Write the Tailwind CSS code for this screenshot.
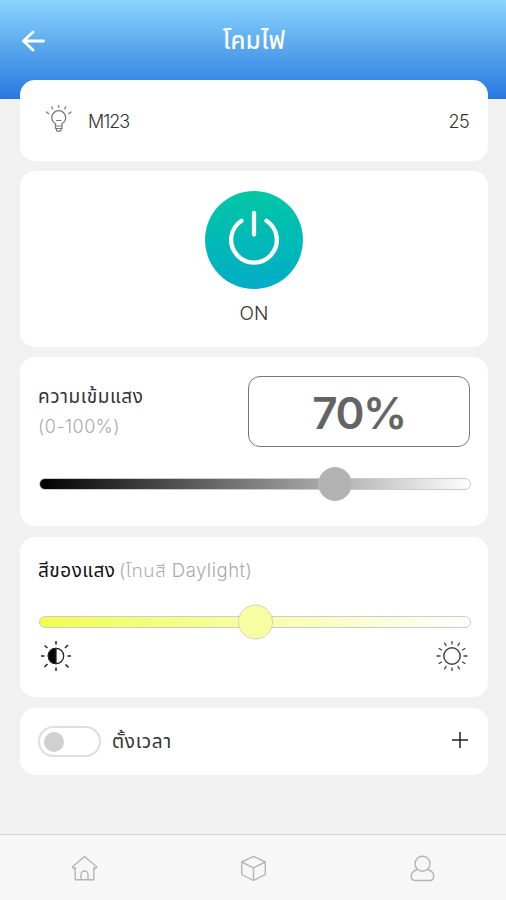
<!DOCTYPE html>
<html lang="th">
  <head>
    <meta charset="UTF-8" />
    <meta name="viewport" content="width=device-width, initial-scale=1.0" />
    <title>โคมไฟ</title>
    <script src="https://cdn.jsdelivr.net/npm/@tailwindcss/browser@4"></script>
  </head>
  <body
    class="flex flex-col h-[900px] overflow-hidden bg-[#f1f1f1] font-['Inter','Noto_Sans_Thai','Noto_Sans',sans-serif] font-light text-[#333]"
  >
    <header
      class="h-[99px] shrink-0 bg-linear-to-b from-[#8bd5ff] via-[#57a5ec] via-50% to-[#2878e0] px-[22px] pb-[19px] grid grid-cols-[1fr_auto_1fr] items-center text-white"
    >
      <button aria-label="Back" class="justify-self-start">
        <svg
          class="w-[23px] h-[22px] mt-px"
          viewBox="0 0 23 22"
          fill="none"
          stroke="currentColor"
          stroke-width="2.8"
          stroke-linecap="round"
          stroke-linejoin="round"
        >
          <path d="M11 2 1.5 11 11 20M2 11h19.5" />
        </svg>
      </button>
      <h1 class="ml-[2px] mt-[2px] text-[24px] leading-[30px] font-medium tracking-[0.3px]">โคมไฟ</h1>
    </header>

    <main class="flex flex-col gap-[10px] -mt-[19px] pl-5 pr-[18px]">
      <!-- device -->
      <section class="h-[81px] flex items-center bg-white rounded-[15px] pl-[25px] pr-[19px]">
        <svg
          class="w-[27px] h-[30px] -mt-1"
          viewBox="0 0 27 30"
          fill="none"
          stroke="#777"
          stroke-width="1.2"
          stroke-linecap="round"
        >
          <path d="M10.5 22v-2.5C8 18 6.700 16 6.700 13.700a7 7 0 0 1 14 0c0 2.300-1.300 4.300-3.700 5.800V22zM10.500 22v2.500h6.500V22M11.500 24.500v1.500c0 1.700 4.500 1.700 4.500 0v-1.500M11.500 16.500h4.500" />
          <path d="M13.700 1.500v2M6.700 2.700l1 2.300M20.700 2.700l-1 2.300M1.500 8l2.300 1.700M26 8l-2.400 1.700" />
        </svg>
        <span class="ml-4 mt-[3px] text-[18px] leading-6 tracking-[-1px]">M123</span>
        <span class="ml-auto mt-[3px] text-[18px] leading-6 tracking-[-0.6px]">25</span>
      </section>

      <!-- power -->
      <section class="h-[176px] flex flex-col items-center bg-white rounded-[15px] pt-[19.5px]">
        <button
          aria-label="Power"
          class="size-[98px] rounded-full bg-linear-to-b from-[#04c7a4] to-[#03acc6] text-white"
        >
          <svg
            class="size-[98px]"
            viewBox="0 0 98 98"
            fill="none"
            stroke="currentColor"
            stroke-width="4.3"
            stroke-linecap="round"
          >
            <path d="M49 22v21.500M36.500 29.700a22.800 22.800 0 1 0 25 0" />
          </svg>
        </button>
        <span class="mt-[13px] text-[19px] leading-6">ON</span>
      </section>

      <!-- brightness -->
      <section class="h-[169px] bg-white rounded-[15px] pt-[19px] pl-[18px] pr-[17px]">
        <div class="flex justify-between">
          <div class="pt-[9px]">
            <p class="text-[19px] leading-6 font-normal tracking-[0.6px]">ความเข้มแสง</p>
            <p class="mt-[6px] text-[18px] leading-6 tracking-[0.5px] text-[#aaa]">(0-100%)</p>
          </div>
          <div
            class="w-[222px] h-[71px] mr-px pt-0.5 flex items-center justify-center rounded-[12px] border border-[#777] text-[44px] font-semibold tracking-[-1.5px] text-[#646464]"
          >
            70%
          </div>
        </div>
        <div class="relative mt-[31px] ml-px h-3 rounded-full border border-[#ccc] bg-linear-to-r/srgb from-black to-white">
          <div class="absolute top-1/2 left-[278px] size-[34px] -translate-y-1/2 rounded-full border border-[#bbb] bg-[#b2b2b2]"></div>
        </div>
      </section>

      <!-- color tone -->
      <section class="h-[160px] mt-px bg-white rounded-[15px] pt-[21px] pl-[18px] pr-[17px]">
        <p class="text-[19px] leading-6">
          <span class="font-normal tracking-[0.5px] text-[#111]">สีของแสง</span>
          <span class="-ml-0.5 text-[18.5px] tracking-[0.5px] text-[#aaa]">(โทนสี Daylight)</span>
        </p>
        <div class="relative mt-[33px] ml-px h-3 rounded-full border border-[#ccc] bg-linear-to-r/srgb from-[#efff4f] to-white">
          <div class="absolute top-1/2 left-[198px] size-[35px] -translate-y-1/2 rounded-full border border-[#d4d4b8] bg-[#f8ffa2]"></div>
        </div>
        <div class="flex justify-between mt-[12px] pl-[2px] pr-[3px]">
          <svg class="size-8" viewBox="-16 -16 32 32" fill="none" stroke="#222" stroke-width="1.3">
            <circle r="7.7" />
            <path d="M0-7.700a7.700 7.700 0 0 0 0 15.400z" fill="#000" />
            <path stroke-width="1.5" d="M0-15v3.500M0 15v-3.500M-15 0h3.500M15 0h-3.500M-11.500-10.500l3 2.500M12-11l-3 3M-11.500 11l3-3M12.500 11.500l-3-3" />
          </svg>
          <svg class="size-8" viewBox="-16 -16 32 32" fill="none" stroke="#444" stroke-width="1.5">
            <circle r="8.2" />
            <path stroke-width="1.3" d="M0-15v3.500M0 15v-3.500M-15.500 0h4M15.500 0h-4M-13.400-7.700l3.400 2M13.400-7.700l-3.400 2M-13.400 7.700l3.400-2M13.400 7.700l-3.400-2M-7.700-13.400l2 3.400M7.700-13.400l-2 3.400M-7.700 13.400l2-3.400M7.700 13.400l-2-3.400" />
          </svg>
        </div>
      </section>

      <!-- timer -->
      <section class="h-[67px] mt-px flex items-center bg-white rounded-[15px] pl-[18px] pr-[20px]">
        <div class="w-[63px] h-[31px] flex items-center rounded-full border-2 border-[#dedede] pl-1">
          <div class="size-5 rounded-full bg-[#d0d0d0]"></div>
        </div>
        <span class="ml-[11px] text-[19px] leading-6 font-normal tracking-[0.7px]">ตั้งเวลา</span>
        <svg class="ml-auto mb-[3px] size-4" viewBox="0 0 16 16" stroke="#222" stroke-width="1.5">
          <path d="M8 0v16M0 8h16" />
        </svg>
      </section>
    </main>

    <nav
      class="mt-auto h-[66px] shrink-0 flex items-center justify-between bg-[#f7f7f7] border-t border-[#d4d4d4] pl-[71px] pr-[70px] pt-0.5 text-[#b5b5b5]"
    >
      <svg class="size-[27px]" viewBox="0 0 27 27" fill="none" stroke="currentColor" stroke-width="1.4" stroke-linejoin="round">
        <path d="M13.500 1.500 1.200 12l1.600 1.700 1.400-1.100v12.200h18.600V12.600l1.400 1.100 1.600-1.700zM10 24.800v-5.300a3.500 3.500 0 0 1 7 0v5.300" />
      </svg>
      <svg class="size-[27px]" viewBox="0 0 27 27" fill="none" stroke="currentColor" stroke-width="1.4" stroke-linejoin="round">
        <path d="M13.500 1.300 25.300 7v12.500l-11.800 6-11.800-6V7zM1.700 7l11.800 5.800L25.300 7M13.500 12.800v12.700" />
      </svg>
      <svg class="size-[27px]" viewBox="0 0 27 27" fill="none" stroke="currentColor" stroke-width="1.4">
        <circle cx="13.5" cy="8.7" r="7.5" />
        <path d="M8.500 14.500C4.500 15.500 2.300 18 2.300 21.500c0 2.700 1.500 4 4 4h14.400c2.500 0 4-1.300 4-4 0-3.500-2.200-6-6.200-7" />
      </svg>
    </nav>
  </body>
</html>
